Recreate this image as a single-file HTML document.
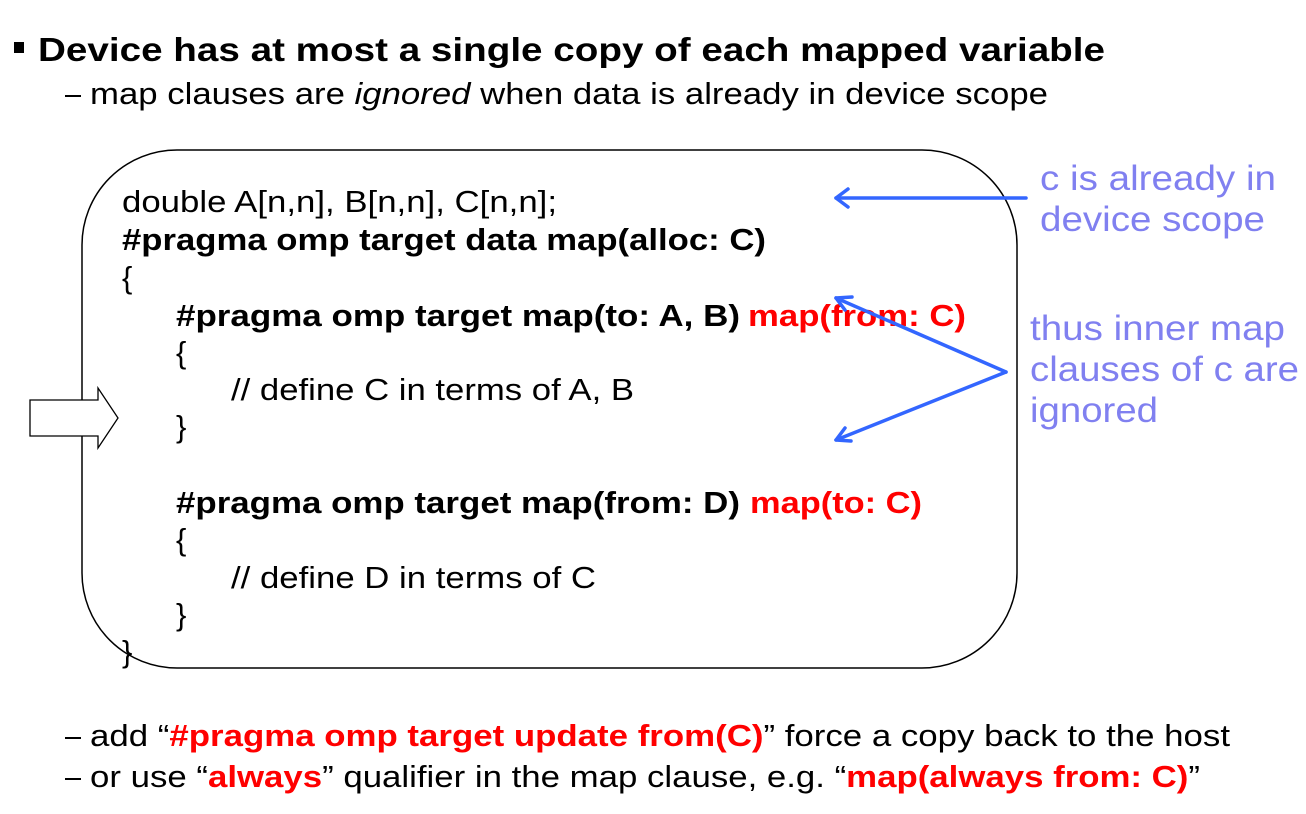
<!DOCTYPE html>
<html><head><meta charset="utf-8"><style>html,body{margin:0;padding:0;background:#fff;width:1306px;height:814px;overflow:hidden}</style></head>
<body>
<svg width="1306" height="814" viewBox="0 0 1306 814" xmlns="http://www.w3.org/2000/svg" font-family="Liberation Sans, Arial, sans-serif">
<rect x="14" y="42" width="10" height="11" fill="#000"/>
<text x="38" y="61" font-size="33" font-weight="bold" textLength="1067" lengthAdjust="spacingAndGlyphs">Device has at most a single copy of each mapped variable</text>
<rect x="65" y="95" width="16" height="2" fill="#000"/>
<text x="90" y="104" font-size="31" textLength="958" lengthAdjust="spacingAndGlyphs">map clauses are <tspan font-style="italic">ignored</tspan> when data is already in device scope</text>

<rect x="82" y="150" width="935" height="518" rx="95" ry="95" fill="none" stroke="#000" stroke-width="1.5"/>

<g font-size="31">
<text x="122" y="212" textLength="435" lengthAdjust="spacingAndGlyphs">double A[n,n], B[n,n], C[n,n];</text>
<text x="122" y="250" font-weight="bold" textLength="644" lengthAdjust="spacingAndGlyphs">#pragma omp target data map(alloc: C)</text>
<text x="122" y="288">{</text>
<text x="176" y="326" font-weight="bold" textLength="564" lengthAdjust="spacingAndGlyphs">#pragma omp target map(to: A, B)</text>
<text x="748" y="326" font-weight="bold" fill="#f00" textLength="218" lengthAdjust="spacingAndGlyphs">map(from: C)</text>
<text x="176" y="363">{</text>
<text x="231" y="400" textLength="403" lengthAdjust="spacingAndGlyphs">// define C in terms of A, B</text>
<text x="176" y="437">}</text>
<text x="176" y="513" font-weight="bold" textLength="564" lengthAdjust="spacingAndGlyphs">#pragma omp target map(from: D)</text>
<text x="750" y="513" font-weight="bold" fill="#f00" textLength="172" lengthAdjust="spacingAndGlyphs">map(to: C)</text>
<text x="176" y="550">{</text>
<text x="231" y="588" textLength="365" lengthAdjust="spacingAndGlyphs">// define D in terms of C</text>
<text x="176" y="625">}</text>
<text x="122" y="662">}</text>
</g>

<g font-size="35" fill="#8080f0">
<text x="1040" y="190" textLength="236" lengthAdjust="spacingAndGlyphs">c is already in</text>
<text x="1040" y="231" textLength="225" lengthAdjust="spacingAndGlyphs">device scope</text>
<text x="1030" y="340" textLength="255" lengthAdjust="spacingAndGlyphs">thus inner map</text>
<text x="1030" y="381" textLength="269" lengthAdjust="spacingAndGlyphs">clauses of c are</text>
<text x="1030" y="422" textLength="128" lengthAdjust="spacingAndGlyphs">ignored</text>
</g>

<g stroke="#3366ff" stroke-width="3.5" fill="none" stroke-linecap="round" stroke-linejoin="round">
<line x1="1026" y1="198" x2="836" y2="198"/>
<polyline points="848,189 836,198 848,207"/>
<line x1="1006" y1="372" x2="836" y2="298"/>
<polyline points="852,297 836,298 845,310"/>
<line x1="1006" y1="372" x2="836" y2="440"/>
<polyline points="845,428 836,440 851,441"/>
</g>

<polygon points="30,400 98,400 98,388 118,418 98,448 98,436 30,436" fill="#fff" stroke="#000" stroke-width="1.3"/>

<rect x="65" y="737" width="16" height="2" fill="#000"/>
<text x="90" y="746" font-size="31" textLength="1140" lengthAdjust="spacingAndGlyphs">add “<tspan fill="#f00" font-weight="bold">#pragma omp target update from(C)</tspan>” force a copy back to the host</text>
<rect x="65" y="778" width="16" height="2" fill="#000"/>
<text x="90" y="787" font-size="31" textLength="1110" lengthAdjust="spacingAndGlyphs">or use “<tspan fill="#f00" font-weight="bold">always</tspan>” qualifier in the map clause, e.g. “<tspan fill="#f00" font-weight="bold">map(always from: C)</tspan>”</text>
</svg>
</body></html>
